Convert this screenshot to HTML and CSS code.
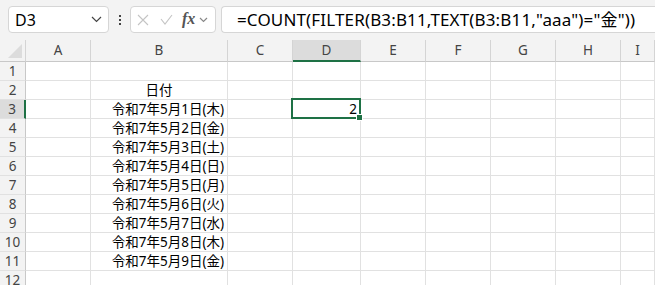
FILE: index.html
```html
<!DOCTYPE html>
<html lang="ja">
<head>
  <meta charset="UTF-8" />
  <title>Sheet</title>
  <link rel="stylesheet" href="styles.css">
</head>
<body>
  <!-- Formula bar -->
  <div class="toolbar">
    <div class="namebox">
      <span>D3</span>
      <svg class="chev" width="11" height="7" viewBox="0 0 11 7"><polyline points="1,1 5.5,5.5 10,1" /></svg>
    </div>
    <div class="grip"><i></i><i></i><i></i></div>
    <div class="fxbox">
      <svg class="ico" width="12" height="12" viewBox="0 0 12 12"><path d="M1 1 L11 11 M11 1 L1 11" /></svg>
      <svg class="ico" width="13" height="11" viewBox="0 0 13 11"><polyline points="1,5 5,10 12,1" /></svg>
      <span class="fx">fx</span>
      <svg class="chev small" width="9" height="6" viewBox="0 0 9 6"><polyline points="1,1 4.5,4.5 8,1" /></svg>
    </div>
    <div class="formula">=COUNT(FILTER(B3:B11,TEXT(B3:B11,"aaa")="金"))</div>
  </div>

  <!-- Grid -->
  <div class="sheet">
    <div class="row head">
      <div class="corner"><span class="tri"></span></div>
      <div class="ch">A</div><div class="ch">B</div><div class="ch">C</div><div class="ch sel">D</div>
      <div class="ch">E</div><div class="ch">F</div><div class="ch">G</div><div class="ch">H</div><div class="ch">I</div>
    </div>
    <div class="row"><div class="rh">1</div><div class="c"></div><div class="c"></div><div class="c"></div><div class="c"></div><div class="c"></div><div class="c"></div><div class="c"></div><div class="c"></div><div class="c"></div></div>
    <div class="row"><div class="rh">2</div><div class="c"></div><div class="c center">日付</div><div class="c"></div><div class="c"></div><div class="c"></div><div class="c"></div><div class="c"></div><div class="c"></div><div class="c"></div></div>
    <div class="row"><div class="rh sel">3</div><div class="c"></div><div class="c">令和7年5月1日(木)</div><div class="c"></div><div class="c active">2<span class="frame"><span class="handle"></span></span></div><div class="c"></div><div class="c"></div><div class="c"></div><div class="c"></div><div class="c"></div></div>
    <div class="row"><div class="rh">4</div><div class="c"></div><div class="c">令和7年5月2日(金)</div><div class="c"></div><div class="c"></div><div class="c"></div><div class="c"></div><div class="c"></div><div class="c"></div><div class="c"></div></div>
    <div class="row"><div class="rh">5</div><div class="c"></div><div class="c">令和7年5月3日(土)</div><div class="c"></div><div class="c"></div><div class="c"></div><div class="c"></div><div class="c"></div><div class="c"></div><div class="c"></div></div>
    <div class="row"><div class="rh">6</div><div class="c"></div><div class="c">令和7年5月4日(日)</div><div class="c"></div><div class="c"></div><div class="c"></div><div class="c"></div><div class="c"></div><div class="c"></div><div class="c"></div></div>
    <div class="row"><div class="rh">7</div><div class="c"></div><div class="c">令和7年5月5日(月)</div><div class="c"></div><div class="c"></div><div class="c"></div><div class="c"></div><div class="c"></div><div class="c"></div><div class="c"></div></div>
    <div class="row"><div class="rh">8</div><div class="c"></div><div class="c">令和7年5月6日(火)</div><div class="c"></div><div class="c"></div><div class="c"></div><div class="c"></div><div class="c"></div><div class="c"></div><div class="c"></div></div>
    <div class="row"><div class="rh">9</div><div class="c"></div><div class="c">令和7年5月7日(水)</div><div class="c"></div><div class="c"></div><div class="c"></div><div class="c"></div><div class="c"></div><div class="c"></div><div class="c"></div></div>
    <div class="row"><div class="rh">10</div><div class="c"></div><div class="c">令和7年5月8日(木)</div><div class="c"></div><div class="c"></div><div class="c"></div><div class="c"></div><div class="c"></div><div class="c"></div><div class="c"></div></div>
    <div class="row"><div class="rh">11</div><div class="c"></div><div class="c">令和7年5月9日(金)</div><div class="c"></div><div class="c"></div><div class="c"></div><div class="c"></div><div class="c"></div><div class="c"></div><div class="c"></div></div>
    <div class="row"><div class="rh">12</div><div class="c"></div><div class="c"></div><div class="c"></div><div class="c"></div><div class="c"></div><div class="c"></div><div class="c"></div><div class="c"></div><div class="c"></div></div>
  </div>
</body>
</html>
```

FILE: styles.css
```css
body {
  margin: 0;
  background-color: #fff;
  font-family: 'Noto Sans', 'Noto Sans CJK JP', sans-serif;
  color: #000;
  overflow: hidden;
}
.toolbar {
  height: 40px;
  background-color: #f3f3f3;
  display: flex;
  align-items: flex-start;
  padding: 6px 0 0 8px;
  box-sizing: border-box;
}
.namebox {
  flex-shrink: 0;
  width: 101px;
  height: 27px;
  box-sizing: border-box;
  background-color: #fff;
  border: 1px solid #d6d6d6;
  border-radius: 4px;
  display: flex;
  align-items: center;
  justify-content: space-between;
  padding: 0 6px 0 6px;
  font-size: 16px;
}
.chev polyline {
  fill: none;
  stroke: #444;
  stroke-width: 1.2;
}
.chev.small polyline {
  stroke: #888;
}
.grip {
  flex-shrink: 0;
  width: 21px;
  height: 27px;
  display: flex;
  flex-direction: column;
  align-items: center;
  justify-content: center;
  gap: 2px;
}
.grip i {
  width: 2px;
  height: 2px;
  background-color: #444;
}
.fxbox {
  flex-shrink: 0;
  width: 86px;
  height: 27px;
  box-sizing: border-box;
  background-color: #fff;
  border: 1px solid #d6d6d6;
  border-radius: 4px;
  display: flex;
  align-items: center;
  padding: 0 4px 0 6px;
}
.ico {
  margin-right: 11px;
}
.ico path, .ico polyline {
  fill: none;
  stroke: #c4c4c4;
  stroke-width: 1.1;
}
.fx {
  font-family: 'Liberation Serif', serif;
  font-style: italic;
  font-weight: bold;
  font-size: 16px;
  color: #555;
  margin: -2px 4px 0 -2px;
}
.formula {
  flex: 1;
  min-width: 0;
  overflow: hidden;
  height: 27px;
  margin-left: 5px;
  box-sizing: border-box;
  background-color: #fff;
  border: 1px solid #d6d6d6;
  border-right: none;
  border-radius: 4px 0 0 4px;
  padding: 0 0 0 15px;
  font-size: 17px;
  line-height: 25px;
  letter-spacing: 0.15px;
  white-space: nowrap;
}
.row {
  display: grid;
  grid-template-columns: 26px 65px 137px 65px 68px 65px 65px 65px 65px 1fr;
  height: 19px;
}
.row.head {
  height: 22px;
}
.row > div {
  box-sizing: border-box;
  border-right: 1px solid #e1e1e1;
  border-bottom: 1px solid #e1e1e1;
}
.head > div {
  background-color: #f3f3f3;
  border-right-color: #d4d4d4;
  border-bottom-color: #c8c8c8;
  text-align: center;
  font-size: 13.5px;
  line-height: 20px;
  color: #444;
}
.corner {
  position: relative;
}
.tri {
  position: absolute;
  right: 3px;
  bottom: 3px;
  width: 0;
  height: 0;
  border-left: 14px solid transparent;
  border-bottom: 14px solid #dcdcdc;
}
.ch.sel {
  background-color: #dcdcdc;
  border-bottom: 2px solid #1e7145;
}
.rh {
  background-color: #f3f3f3;
  border-right-color: #c8c8c8 !important;
  text-align: center;
  font-size: 13.5px;
  line-height: 18px;
  color: #444;
}
.rh.sel {
  background-color: #dcdcdc;
  border-right: 2px solid #1e7145 !important;
}
.c {
  font-size: 13.5px;
  line-height: 18px;
  text-align: right;
  padding-right: 3px;
  white-space: nowrap;
}
.c.center {
  text-align: center;
  padding-right: 0;
}
.active {
  position: relative;
}
.frame {
  position: absolute;
  top: -2px;
  left: -2px;
  right: -1px;
  bottom: -1px;
  border: 2px solid #1e7145;
}
.handle {
  position: absolute;
  right: -4px;
  bottom: -4px;
  width: 5px;
  height: 5px;
  background-color: #1e7145;
  border: 1px solid #fff;
}
```
